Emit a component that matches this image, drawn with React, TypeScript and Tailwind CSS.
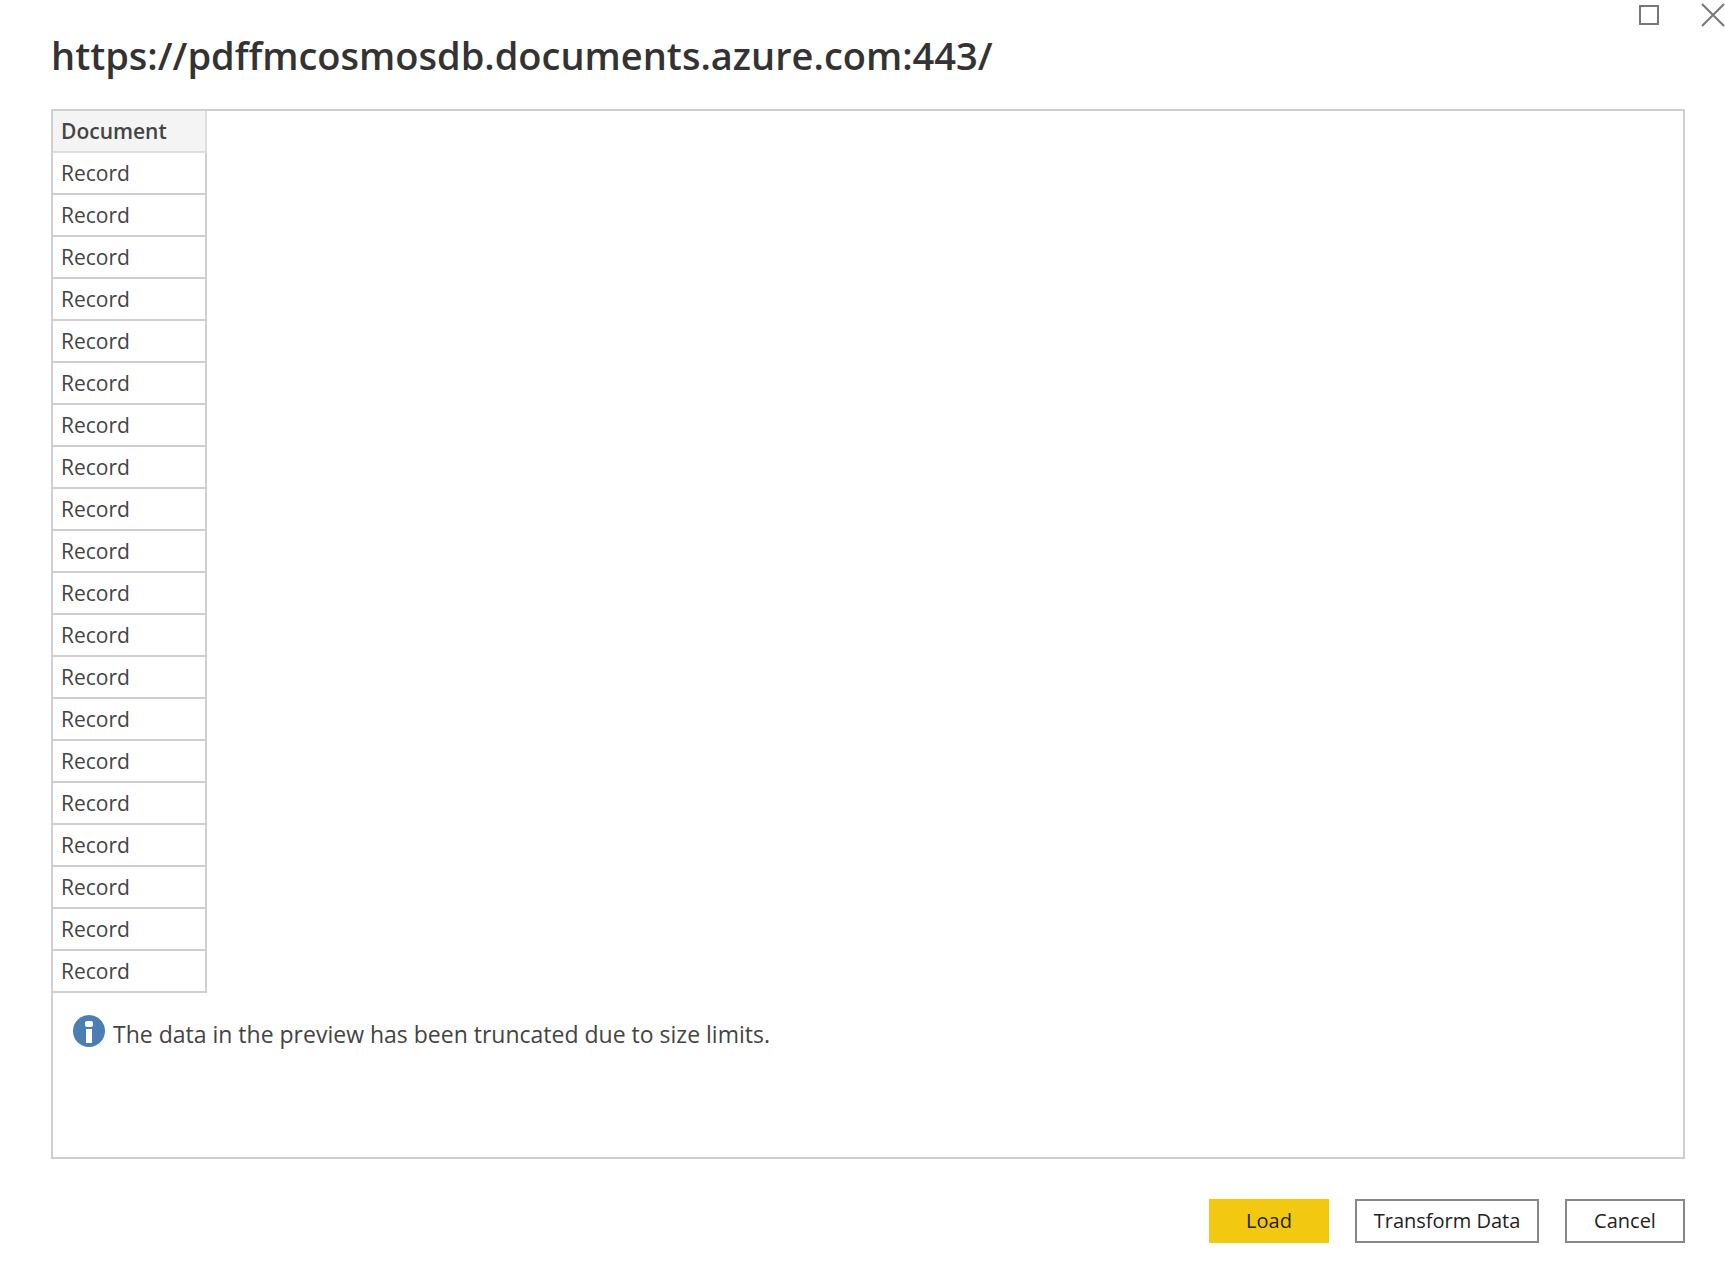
const rows: string[] = Array.from({ length: 20 }, () => "Record");

function InfoIcon() {
  return (
    <svg viewBox="0 0 32 32" className="size-8 shrink-0" aria-hidden="true">
      <circle cx="16" cy="16" r="16" fill="#4a7eb4" />
      <rect x="12" y="6" width="8" height="6" rx="2" fill="#fff" />
      <rect x="13" y="14" width="6" height="14" fill="#fff" />
    </svg>
  );
}

export default function App() {
  return (
    <div className="flex min-h-screen flex-col bg-white pb-8 font-['Open_Sans','Noto_Sans',sans-serif] text-[#444444]">
      <div className="flex h-[30px] items-center justify-end gap-[42px]">
        <button type="button" aria-label="Maximize" className="size-5 border-2 border-[#777777]" />
        <button type="button" aria-label="Close">
          <svg viewBox="0 0 24 24" className="size-6" fill="none" stroke="#777777" strokeWidth="2" aria-hidden="true">
            <path d="M1 1L23 23M23 1L1 23" />
          </svg>
        </button>
      </div>

      <h1 className="mx-[51px] text-[38px] leading-[50px] font-semibold text-[#333333]">
        https://pdffmcosmosdb.documents.azure.com:443/
      </h1>

      <main className="mt-[29px] mr-10 ml-[51px] flex-1 border-2 border-[#cfcfcf]">
        <table className="w-[154px] border-separate border-spacing-0 text-left text-[21px] leading-[40px]">
          <thead>
            <tr>
              <th scope="col" className="border-r-2 border-b-2 border-[#dedede] bg-[#f4f4f4] p-0 pl-2 font-semibold">
                Document
              </th>
            </tr>
          </thead>
          <tbody>
            {rows.map((value, i) => (
              <tr key={i}>
                <td className="border-r-2 border-b-2 border-[#cfcfcf] p-0 pl-2">{value}</td>
              </tr>
            ))}
          </tbody>
        </table>
        <div className="flex items-start gap-2 pt-[22px] pl-5">
          <InfoIcon />
          <p className="pt-[3px] text-[23px] leading-8">The data in the preview has been truncated due to size limits.</p>
        </div>
      </main>

      <footer className="mt-10 mr-10 flex justify-end gap-[26px] text-[20px] text-[#222222]">
        <button type="button" className="h-11 w-[120px] bg-[#f2c811]">Load</button>
        <button type="button" className="h-11 w-[184px] border-2 border-[#888888]">Transform Data</button>
        <button type="button" className="h-11 w-[120px] border-2 border-[#888888]">Cancel</button>
      </footer>
    </div>
  );
}
